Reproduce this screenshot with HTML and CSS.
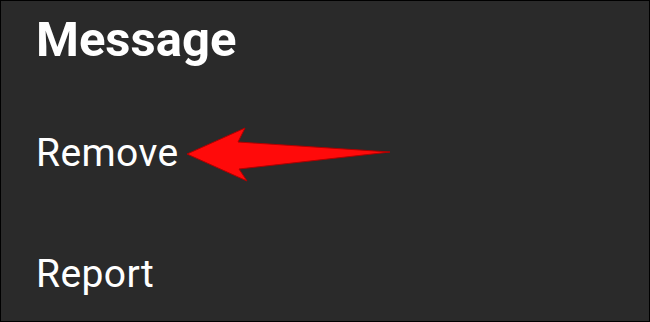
FILE: index.html
```html
<!DOCTYPE html>
<html>
<head>
<meta charset="utf-8">
<link rel="stylesheet" href="styles.css">
</head>
<body>
<div class="screen">
  <div class="menu">
    <div class="title">Message</div>
    <div class="item">Remove</div>
    <div class="item">Report</div>
  </div>
  <svg class="arrow" width="650" height="322" viewBox="0 0 650 322">
    <polygon points="187,154 245,128 238,142 390,152 239,169 247,181" fill="#ff0a0a" stroke="#b00000" stroke-width="1" stroke-linejoin="miter"/>
  </svg>
</div>
</body>
</html>
```
FILE: styles.css
```css
html, body {
  margin: 0;
  padding: 0;
  background: #000;
}
.screen {
  position: relative;
  width: 650px;
  height: 322px;
  box-sizing: border-box;
  border: 1px solid #000;
  background: #2a2a2a;
  overflow: hidden;
}
.menu {
  display: flex;
  flex-direction: column;
  padding: 9px 0 0 35px;
  font-family: Roboto, "Liberation Sans", sans-serif;
  color: #fff;
}
.title {
  font-size: 49px;
  font-weight: 700;
  line-height: 60px;
  margin-bottom: 23px;
}
.item {
  font-size: 39px;
  font-weight: 400;
  letter-spacing: 0.4px;
  line-height: 121px;
  height: 121px;
}
.arrow {
  position: absolute;
  left: -1px;
  top: -1px;
}
```
